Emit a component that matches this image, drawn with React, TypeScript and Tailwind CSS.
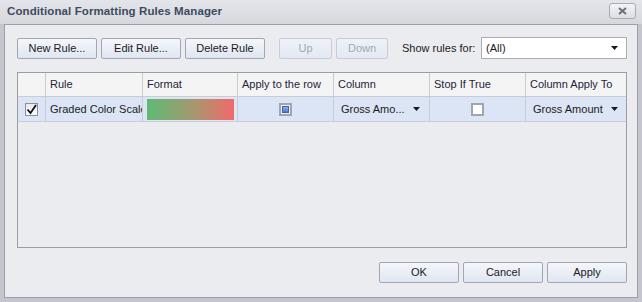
import React from 'react';

const font = { fontFamily: '"Liberation Sans", Arial, sans-serif' };

function Btn({ label, w, disabled }: { label: string; w: string; disabled?: boolean }) {
  return (
    <div
      className={`${w} h-[21px] flex items-center justify-center rounded-[2px] border text-[11px] ${
        disabled
          ? 'border-[#c9ccd3] bg-[linear-gradient(#eef1f7,#e3e9f4)] text-[#a3a9b4]'
          : 'border-[#a3a7b0] bg-[linear-gradient(#f4f6fa,#dfe6f3)] text-[#1b1b1b]'
      }`}
    >
      {label}
    </div>
  );
}

function Arrow() {
  return (
    <svg width="7" height="4" viewBox="0 0 7 4" className="shrink-0">
      <path d="M0 0h7L3.5 4z" fill="#1a1a1a" />
    </svg>
  );
}

export default function App() {
  return (
    <div className="w-[642px] h-[302px] flex flex-col bg-[#c4c5cd] overflow-hidden" style={font}>
      {/* title bar */}
      <div className="h-[24px] shrink-0 flex items-center justify-between pl-[7px] pr-[6px] bg-[linear-gradient(#e4e5ea,#d6d8de)]">
        <span className="text-[11.5px] font-bold text-[#3d4a5f] tracking-[0.1px]">Conditional Formatting Rules Manager</span>
        <div className="w-[27px] h-[16px] mt-[-2px] rounded-[3px] border border-[#a9abb3] bg-[linear-gradient(#f2f3f6,#dcdee4)] flex items-center justify-center">
          <svg width="9" height="8" viewBox="0 0 9 8">
            <path d="M1 1l7 6M8 1L1 7" stroke="#6b6f79" strokeWidth="2" />
          </svg>
        </div>
      </div>

      {/* body */}
      <div className="flex-1 px-[4px] pb-[4px] flex">
        <div className="flex-1 border border-[#9d9ea7] bg-[#ebecef] flex flex-col pl-[12px] pr-[10px]">
          {/* toolbar */}
          <div className="mt-[12px] flex items-center h-[22px]">
            <div className="flex gap-[4px]">
              <Btn label="New Rule..." w="w-[80px]" />
              <Btn label="Edit Rule..." w="w-[80px]" />
              <Btn label="Delete Rule" w="w-[80px]" />
            </div>
            <div className="flex gap-[4px] ml-[14px]">
              <Btn label="Up" w="w-[53px]" disabled />
              <Btn label="Down" w="w-[52px]" disabled />
            </div>
            <span className="ml-[14px] text-[11px] text-[#1b1b1b]">Show rules for:</span>
            <div className="ml-auto w-[146px] h-[22px] bg-white border border-[#abadb5] flex items-center justify-between pl-[4px] pr-[8px] text-[11px] text-[#1b1b1b]">
              <span>(All)</span>
              <Arrow />
            </div>
          </div>

          {/* grid */}
          <div className="mt-[13px] h-[176px] border border-[#9c9da5] flex flex-col text-[11px]">
            <div className="grid grid-cols-[28px_97px_95px_96px_96px_96px_1fr] h-[24px] bg-[#f4f4f5] border-b border-[#c9ccd4] text-[#1e2538]">
              <div className="border-r border-[#c9ccd4]" />
              <div className="border-r border-[#c9ccd4] flex items-center pl-[4px]">Rule</div>
              <div className="border-r border-[#c9ccd4] flex items-center pl-[4px]">Format</div>
              <div className="border-r border-[#c9ccd4] flex items-center pl-[4px] whitespace-nowrap overflow-hidden">Apply to the row</div>
              <div className="border-r border-[#c9ccd4] flex items-center pl-[4px]">Column</div>
              <div className="border-r border-[#c9ccd4] flex items-center pl-[4px]">Stop If True</div>
              <div className="flex items-center pl-[4px] whitespace-nowrap">Column Apply To</div>
            </div>
            <div className="grid grid-cols-[28px_97px_95px_96px_96px_96px_1fr] h-[25px] bg-[#dce5f5] border-b border-[#c9ccd4] text-[#1b1b1b]">
              <div className="border-r border-[#c9ccd4] flex items-center justify-center">
                <div className="w-[13px] h-[13px] border border-[#8c8f98] bg-[linear-gradient(#e9eaee,#fafafb)] flex items-center justify-center">
                  <svg width="11" height="11" viewBox="0 0 11 11">
                    <path d="M1.5 5.5l3 3.5L10 1" stroke="#111" strokeWidth="1.8" fill="none" />
                  </svg>
                </div>
              </div>
              <div className="border-r border-[#c9ccd4] flex items-center pl-[4px] whitespace-nowrap overflow-hidden">Graded Color Scale</div>
              <div className="border-r border-[#c9ccd4] flex items-center pl-[4px] pr-[3px]">
                <div className="w-full h-[21px] mt-[1px] bg-[linear-gradient(90deg,#5ebb74,#a19a71_50%,#f06a6a)]" />
              </div>
              <div className="border-r border-[#c9ccd4] flex items-center justify-center">
                <div className="w-[13px] h-[13px] border-2 border-[#a3a5ad] bg-[#eef0f5] flex items-center justify-center">
                  <div className="w-[7px] h-[7px] border border-[#3d64b0] bg-[linear-gradient(#8eaee9,#4f79cf)]" />
                </div>
              </div>
              <div className="border-r border-[#c9ccd4] flex items-center justify-between pl-[7px] pr-[9px]">
                <span>Gross Amo...</span>
                <Arrow />
              </div>
              <div className="border-r border-[#c9ccd4] flex items-center justify-center">
                <div className="w-[13px] h-[13px] border-2 border-[#a3a5ad] bg-white" />
              </div>
              <div className="flex items-center justify-between pl-[7px] pr-[8px]">
                <span>Gross Amount</span>
                <Arrow />
              </div>
            </div>
          </div>

          {/* footer */}
          <div className="mt-[14px] flex justify-end gap-[4px]">
            <Btn label="OK" w="w-[80px]" />
            <Btn label="Cancel" w="w-[80px]" />
            <Btn label="Apply" w="w-[80px]" />
          </div>
        </div>
      </div>
    </div>
  );
}
